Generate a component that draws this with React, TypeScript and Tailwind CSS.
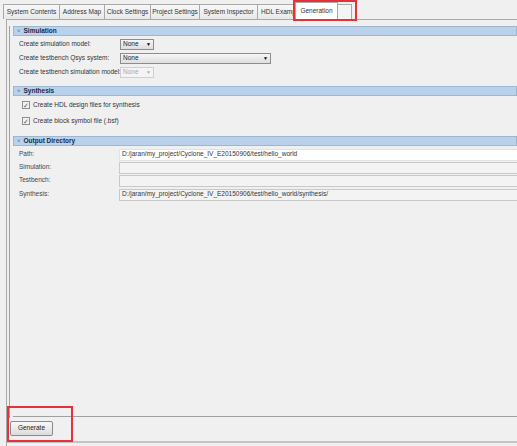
import React from 'react';

const tabs = [
  { label: 'System Contents', w: 'w-[57px] justify-center' },
  { label: 'Address Map', w: 'w-[46px] justify-center' },
  { label: 'Clock Settings', w: 'w-[47px] justify-center' },
  { label: 'Project Settings', w: 'w-[50px] justify-center' },
  { label: 'System Inspector', w: 'w-[59px] justify-center' },
  { label: 'HDL Examp', w: 'w-[39px] justify-start pl-[3px]' },
];

function SectionHeader({ title }: { title: string }) {
  return (
    <div className="flex h-[10px] items-center border border-[#9fb6cf] bg-[#b9d1ea] pl-[3px]">
      <span className="mr-[3px] text-[6px] leading-none text-[#4a5a70]">˅</span>
      <span className="font-bold text-[#1c2a44]">{title}</span>
    </div>
  );
}

function Select({ value, width, disabled }: { value: string; width: string; disabled?: boolean }) {
  return (
    <div
      className={`flex h-[11px] items-center justify-between border px-[2px] ${width} ${
        disabled ? 'border-[#cfcfcf] bg-[#f4f4f4] text-[#a8a8a8]' : 'border-[#8d8d8d] bg-gradient-to-b from-[#f6f6f6] to-[#dedede] text-[#222]'
      }`}
    >
      <span>{value}</span>
      <span className={`text-[5px] leading-none ${disabled ? 'text-[#b0b0b0]' : 'text-black'}`}>▼</span>
    </div>
  );
}

function Check({ label }: { label: string }) {
  return (
    <div className="flex items-center gap-[3px] pl-[9px]">
      <div className="flex h-[8px] w-[8px] items-center justify-center border border-[#8f8f8f] bg-[#f2f2f2] text-[7px] leading-none text-[#3a5a8a]">
        ✓
      </div>
      <span>{label}</span>
    </div>
  );
}

function PathRow({ label, value, white }: { label: string; value?: string; white?: boolean }) {
  return (
    <div className="flex h-[13px] items-center">
      <span className="w-[106px] shrink-0 pl-[6px] text-[#444]">{label}</span>
      <div
        className={`flex h-[12px] flex-1 items-center border-t border-b border-l pl-[2px] ${
          white ? 'border-[#e3e3e3] bg-white' : 'border-[#c9c9c9] bg-[#f3f3f3]'
        }`}
      >
        {value}
      </div>
    </div>
  );
}

export default function App() {
  return (
    <div
      className="relative flex h-[446px] w-[517px] flex-col overflow-hidden whitespace-nowrap bg-[#f0f0f0] text-[6.5px] leading-none text-[#333]"
      style={{ fontFamily: '"Liberation Sans", Arial, sans-serif' }}
    >
      {/* tab strip */}
      <div className="flex h-[19px] items-end pl-[3px]">
        {tabs.map((t) => (
          <div
            key={t.label}
            className={`-mr-px flex h-[15px] items-center overflow-hidden border border-b-0 border-[#a9a9a9] bg-gradient-to-b from-[#f7f7f7] to-[#e9e9e9] text-[#333] ${t.w}`}
          >
            {t.label}
          </div>
        ))}
        <div className="flex h-[17px] w-[43px] items-center justify-center border border-b-0 border-[#a9a9a9] bg-white">
          Generation
        </div>
        <div className="h-[15px] w-[14px] border border-b-0 border-l-0 border-[#a9a9a9] bg-[#f4f4f4]" />
      </div>

      {/* body */}
      <div className="ml-[6px] flex flex-1 flex-col border-l border-t border-[#a9a9a9] bg-[#f0f0f0]">
        <div className="ml-[2px] mt-[6px] flex flex-1 flex-col border-l border-[#a0a0a0] pl-[3px]">
          <SectionHeader title="Simulation" />
          <div className="flex flex-col gap-[3px] pt-[3px]">
            <div className="flex h-[11px] items-center">
              <span className="w-[107px] pl-[6px]">Create simulation model:</span>
              <Select value="None" width="w-[34px]" />
            </div>
            <div className="flex h-[11px] items-center">
              <span className="w-[107px] pl-[6px]">Create testbench Qsys system:</span>
              <Select value="None" width="w-[151px]" />
            </div>
            <div className="flex h-[11px] items-center">
              <span className="w-[107px] pl-[6px]">Create testbench simulation model:</span>
              <Select value="None" width="w-[34px]" disabled />
            </div>
          </div>

          <div className="mt-[8px]">
            <SectionHeader title="Synthesis" />
          </div>
          <div className="flex flex-col gap-[8px] pt-[5px]">
            <Check label="Create HDL design files for synthesis" />
            <Check label="Create block symbol file (.bsf)" />
          </div>

          <div className="mt-[11px]">
            <SectionHeader title="Output Directory" />
          </div>
          <div className="flex flex-col pt-[2px]">
            <PathRow label="Path:" value="D:/jaran/my_project/Cyclone_IV_E20150906/test/hello_world" white />
            <PathRow label="Simulation:" />
            <PathRow label="Testbench:" />
            <div className="mt-[1px]">
              <PathRow label="Synthesis:" value="D:/jaran/my_project/Cyclone_IV_E20150906/test/hello_world/synthesis/" />
            </div>
          </div>
          <div className="flex-1" />
          <div className="mb-[1px] border-b border-[#a0a0a0]" />
        </div>

        <div className="flex h-[25px] items-start border-b-2 border-[#c4c4c4] pl-[3px] pt-[3px]">
          <div className="flex h-[15px] w-[43px] items-center justify-center rounded-[2px] border border-[#8a8a8a] bg-gradient-to-b from-[#f8f8f8] to-[#dcdcdc] text-[#222]">
            Generate
          </div>
        </div>
        <div className="h-[3px]" />
      </div>

      {/* annotation boxes */}
      <div className="absolute left-[293px] top-0 h-[21px] w-[64px] border-2 border-[#e8303a]" />
      <div className="absolute left-[7px] top-[406px] h-[36px] w-[66px] border-2 border-[#e8303a]" />
    </div>
  );
}
